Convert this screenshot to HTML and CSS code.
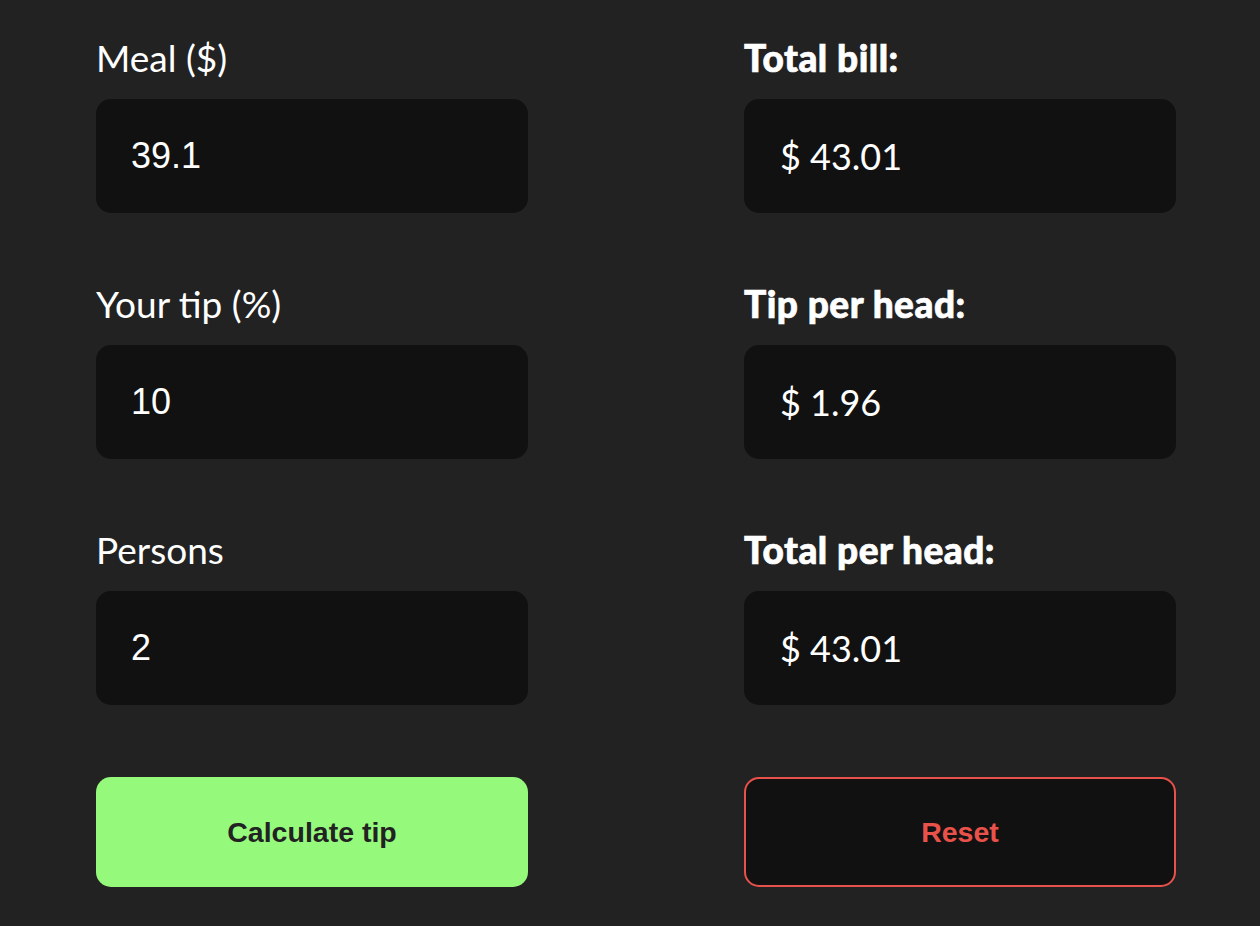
FILE: index.html
```html
<!DOCTYPE html>
<html lang="en">
<head>
<meta charset="utf-8">
<title>Tip calculator</title>
<link rel="stylesheet" href="styles.css">
</head>
<body>
<main class="calc">
  <section class="col">
    <div class="field">
      <label class="label" for="meal">Meal ($)</label>
      <input class="box input" id="meal" type="text" value="39.1">
    </div>
    <div class="field">
      <label class="label" for="tip">Your tip (%)</label>
      <input class="box input" id="tip" type="text" value="10">
    </div>
    <div class="field">
      <label class="label" for="persons">Persons</label>
      <input class="box input" id="persons" type="text" value="2">
    </div>
    <button class="btn btn-calc" type="button">Calculate tip</button>
  </section>
  <section class="col">
    <div class="field">
      <div class="label label-bold">Total bill:</div>
      <div class="box output">$ 43.01</div>
    </div>
    <div class="field">
      <div class="label label-bold">Tip per head:</div>
      <div class="box output">$ 1.96</div>
    </div>
    <div class="field">
      <div class="label label-bold">Total per head:</div>
      <div class="box output">$ 43.01</div>
    </div>
    <button class="btn btn-reset" type="button">Reset</button>
  </section>
</main>
</body>
</html>
```

FILE: styles.css
```css
html, body {
  margin: 0;
  padding: 0;
  background: #222222;
}
body {
  font-family: "Lato", "Liberation Sans", sans-serif;
  color: #ffffff;
}
.calc {
  display: grid;
  grid-template-columns: 432px 432px;
  column-gap: 216px;
  padding: 36px 0 0 96px;
}
.col {
  display: flex;
  flex-direction: column;
}
.field {
  display: flex;
  flex-direction: column;
  gap: 20px;
  margin-bottom: 69px;
}
.field:nth-of-type(3) {
  margin-bottom: 72px;
}
.label {
  display: block;
  font-family: "Lato", sans-serif;
  font-size: 37px;
  line-height: 43px;
  font-weight: 400;
  color: #ffffff;
}
.label-bold {
  font-weight: 900;
  letter-spacing: 0.5px;
  -webkit-text-stroke: 0.7px #ffffff;
}
.box {
  box-sizing: border-box;
  width: 432px;
  height: 114px;
  border: none;
  border-radius: 15px;
  background: #111111;
  color: #ffffff;
  padding: 0 0 0 35px;
  margin: 0;
  outline: none;
}
.input {
  font-family: "Liberation Sans", Arial, sans-serif;
  font-size: 36px;
}
.output {
  display: flex;
  align-items: center;
  padding-left: 36px;
  font-family: "Lato", sans-serif;
  font-size: 36px;
}
.btn {
  box-sizing: border-box;
  width: 432px;
  height: 110px;
  border-radius: 15px;
  font-family: "Liberation Sans", Arial, sans-serif;
  font-weight: 700;
  font-size: 28.5px;
  cursor: pointer;
  margin: 0;
}
.btn-calc {
  background: #95fa7c;
  color: #222222;
  border: none;
}
.btn-reset {
  background: #111111;
  color: #e8524a;
  border: 2px solid #e8524a;
}
```
